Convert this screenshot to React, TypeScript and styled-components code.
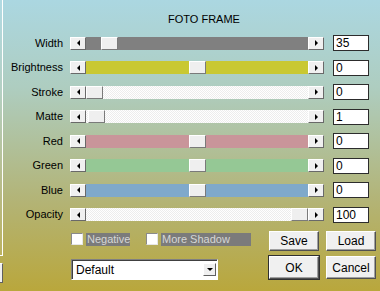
import React from "react";
import styled, { createGlobalStyle } from "styled-components";

type SliderData = {
  label: string;
  value: string;
  color?: string;
  pos: number;
};

const sliders: SliderData[] = [
  { label: "Width", value: "35", color: "#808080", pos: 15 },
  { label: "Brightness", value: "0", color: "#c9c832", pos: 103 },
  { label: "Stroke", value: "0", pos: 0 },
  { label: "Matte", value: "1", pos: 2 },
  { label: "Red", value: "0", color: "#c9959a", pos: 103 },
  { label: "Green", value: "0", color: "#95c895", pos: 103 },
  { label: "Blue", value: "0", color: "#7fa9cb", pos: 103 },
  { label: "Opacity", value: "100", pos: 205 },
];

const App = () => {
  return (
    <Window>
      <GlobalStyle />
      <LeftEdge>
        <EdgePanel />
        <EdgeButton />
      </LeftEdge>
      <Main>
        <Title>FOTO FRAME</Title>
        <Rows>
          {sliders.map((s) => (
            <Row key={s.label}>
              <Label>{s.label}</Label>
              <Slider>
                <ArrowButton>
                  <ArrowLeft />
                </ArrowButton>
                <Track $color={s.color}>
                  <Thumb style={{ left: s.pos }} />
                </Track>
                <ArrowButton>
                  <ArrowRight />
                </ArrowButton>
              </Slider>
              <ValueBox>{s.value}</ValueBox>
            </Row>
          ))}
        </Rows>
        <Bottom>
          <Checks>
            <CheckItem>
              <CheckBox />
              <CheckLabel $width={44}>Negative</CheckLabel>
            </CheckItem>
            <CheckItem>
              <CheckBox />
              <CheckLabel $width={90}>More Shadow</CheckLabel>
            </CheckItem>
          </Checks>
          <Button>Save</Button>
          <Button>Load</Button>
          <Select>
            <SelectText>Default</SelectText>
            <DropButton>
              <ArrowDown />
            </DropButton>
          </Select>
          <Button $default $tall>
            OK
          </Button>
          <Button $tall>Cancel</Button>
        </Bottom>
      </Main>
    </Window>
  );
};

export default App;

const GlobalStyle = createGlobalStyle`
  body {
    margin: 0;
    font-family: "Liberation Sans", Arial, sans-serif;
  }
  * {
    box-sizing: border-box;
  }
`;

const Window = styled.div`
  width: 380px;
  height: 291px;
  display: flex;
  overflow: hidden;
  background: linear-gradient(
    180deg,
    #abd7e1 0%,
    #aecdc0 30%,
    #b0c09a 50%,
    #b3b374 70%,
    #b9a73c 100%
  );
`;

const LeftEdge = styled.div`
  width: 3px;
  display: flex;
  flex-direction: column;
`;

const EdgePanel = styled.div`
  height: 256px;
  border-right: 1px solid #ffffff;
  border-bottom: 1px solid #ffffff;
  background: rgba(255, 255, 255, 0.08);
`;

const EdgeButton = styled.div`
  margin-top: 7px;
  height: 20px;
  background: #f0f0f0;
  border-top: 1px solid #ffffff;
  border-right: 1px solid #606060;
  border-bottom: 1px solid #606060;
`;

const Main = styled.div`
  flex: 1;
  padding-top: 13px;
`;

const Title = styled.div`
  padding-left: 165px;
  font-size: 11px;
  line-height: 13px;
  height: 13px;
  color: #000;
`;

const Rows = styled.div`
  margin-top: 9px;
  display: flex;
  flex-direction: column;
  gap: 8.5px;
`;

const Row = styled.div`
  display: flex;
  align-items: center;
  height: 16px;
`;

const Label = styled.div`
  width: 60px;
  margin-right: 7px;
  text-align: right;
  font-size: 11px;
  line-height: 13px;
  color: #000;
  white-space: nowrap;
`;

const Slider = styled.div`
  display: flex;
  width: 254px;
  height: 13px;
`;

const ArrowButton = styled.div`
  width: 16px;
  height: 13px;
  display: flex;
  align-items: center;
  justify-content: center;
  background: #f0f0f0;
  border-top: 1px solid #ffffff;
  border-left: 1px solid #ffffff;
  border-right: 1px solid #696969;
  border-bottom: 1px solid #696969;
`;

const ArrowLeft = styled.span`
  width: 0;
  height: 0;
  border-top: 3px solid transparent;
  border-bottom: 3px solid transparent;
  border-right: 3px solid #000;
`;

const ArrowRight = styled.span`
  width: 0;
  height: 0;
  border-top: 3px solid transparent;
  border-bottom: 3px solid transparent;
  border-left: 3px solid #000;
`;

const Track = styled.div<{ $color?: string }>`
  position: relative;
  flex: 1;
  height: 13px;
  background: ${(p) =>
    p.$color
      ? p.$color
      : "repeating-conic-gradient(#ffffff 0 25%, #ededed 0 50%) 0 0 / 2px 2px"};
`;

const Thumb = styled.div`
  position: absolute;
  top: 0;
  width: 17px;
  height: 13px;
  background: #efefef;
  border-top: 1px solid #ffffff;
  border-left: 1px solid #ffffff;
  border-right: 1px solid #7a7a7a;
  border-bottom: 1px solid #7a7a7a;
`;

const ValueBox = styled.div`
  margin-left: 9px;
  width: 36px;
  height: 16px;
  background: #ffffff;
  border: 1px solid #2c2c2c;
  padding-left: 2px;
  font-size: 12px;
  line-height: 14px;
  color: #000;
`;

const Bottom = styled.div`
  margin-top: 8.5px;
  margin-left: 68px;
  display: grid;
  grid-template-columns: 191px 50px 50px;
  grid-template-rows: 20px 23px;
  column-gap: 7px;
  row-gap: 5px;
`;

const Checks = styled.div`
  display: flex;
  align-items: center;
  gap: 16px;
  margin-top: -4px;
`;

const CheckItem = styled.div`
  display: flex;
  align-items: center;
  gap: 3px;
`;

const CheckBox = styled.div`
  width: 12px;
  height: 12px;
  background: #ffffff;
  border-top: 1px solid #8a8a8a;
  border-left: 1px solid #8a8a8a;
  border-right: 1px solid #e6e6e6;
  border-bottom: 1px solid #e6e6e6;
`;

const CheckLabel = styled.div<{ $width: number }>`
  width: ${(p) => p.$width}px;
  height: 13px;
  background: #7b7b7b;
  color: #d6d6d6;
  font-size: 11px;
  line-height: 13px;
  padding-left: 1px;
  white-space: nowrap;
`;

const Button = styled.div<{ $default?: boolean; $tall?: boolean }>`
  height: ${(p) => (p.$tall ? 23 : 20)}px;
  display: flex;
  align-items: center;
  justify-content: center;
  background: #f0f0f0;
  font-size: 12px;
  color: #000;
  border-top: 1px solid #ffffff;
  border-left: 1px solid #ffffff;
  border-right: 1px solid #505050;
  border-bottom: 1px solid #505050;
  box-shadow: ${(p) =>
    p.$default
      ? "inset -1px -1px #a0a0a0, 0 0 0 1px #303030"
      : "inset -1px -1px #a0a0a0"};
`;

const Select = styled.div`
  width: 147px;
  height: 21px;
  margin-top: 3px;
  display: flex;
  align-items: center;
  background: #ffffff;
  border-top: 1px solid #808080;
  border-left: 1px solid #808080;
  border-right: 1px solid #ffffff;
  border-bottom: 1px solid #ffffff;
  box-shadow: inset 1px 1px #404040;
`;

const SelectText = styled.div`
  flex: 1;
  padding-left: 4px;
  font-size: 12px;
  color: #000;
`;

const DropButton = styled.div`
  width: 13px;
  height: 13px;
  margin-right: 1px;
  display: flex;
  align-items: center;
  justify-content: center;
  background: #f0f0f0;
  border-top: 1px solid #ffffff;
  border-left: 1px solid #ffffff;
  border-right: 1px solid #606060;
  border-bottom: 1px solid #606060;
`;

const ArrowDown = styled.span`
  width: 0;
  height: 0;
  border-left: 3px solid transparent;
  border-right: 3px solid transparent;
  border-top: 3px solid #000;
`;
